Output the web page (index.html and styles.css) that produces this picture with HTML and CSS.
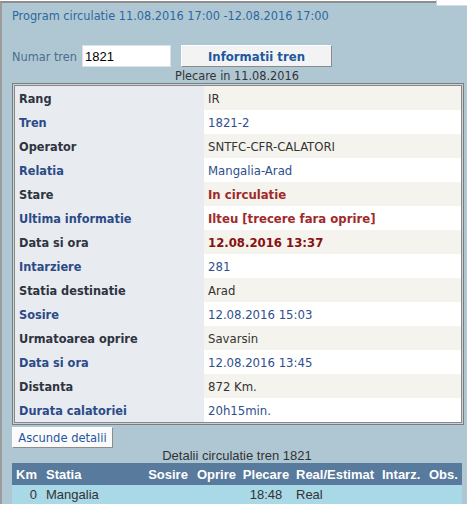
FILE: index.html
```html
<!DOCTYPE html>
<html>
<head>
<meta charset="utf-8">
<link rel="stylesheet" href="styles.css">
</head>
<body>
<div class="corner"></div>
<div class="panel">
  <div class="title">Program circulatie 11.08.2016 17:00 -12.08.2016 17:00</div>
  <div class="form-row">
    <label class="lbl">Numar tren</label>
    <input class="num" type="text" value="1821">
    <button class="btn-info">Informatii tren</button>
  </div>
  <div class="plecare">Plecare in 11.08.2016</div>
  <div class="frame">
    <table class="info">
      <tr class="odd"><th class="dark">Rang</th><td class="dark">IR</td></tr>
      <tr class="even"><th class="blue">Tren</th><td class="blue">1821-2</td></tr>
      <tr class="odd"><th class="dark">Operator</th><td class="dark">SNTFC-CFR-CALATORI</td></tr>
      <tr class="even"><th class="blue">Relatia</th><td class="blue">Mangalia-Arad</td></tr>
      <tr class="odd"><th class="dark">Stare</th><td class="red">In circulatie</td></tr>
      <tr class="even"><th class="blue">Ultima informatie</th><td class="red">Ilteu [trecere fara oprire]</td></tr>
      <tr class="odd"><th class="dark">Data si ora</th><td class="dred">12.08.2016 13:37</td></tr>
      <tr class="even"><th class="blue">Intarziere</th><td class="blue">281</td></tr>
      <tr class="odd"><th class="dark">Statia destinatie</th><td class="dark">Arad</td></tr>
      <tr class="even"><th class="blue">Sosire</th><td class="blue">12.08.2016 15:03</td></tr>
      <tr class="odd"><th class="dark">Urmatoarea oprire</th><td class="dark">Savarsin</td></tr>
      <tr class="even"><th class="blue">Data si ora</th><td class="blue">12.08.2016 13:45</td></tr>
      <tr class="odd"><th class="dark">Distanta</th><td class="dark">872 Km.</td></tr>
      <tr class="even"><th class="blue">Durata calatoriei</th><td class="blue">20h15min.</td></tr>
    </table>
  </div>
  <button class="btn-hide">Ascunde detalii</button>
  <div class="det-title">Detalii circulatie tren 1821</div>
  <table class="det">
    <colgroup>
      <col class="c-km"><col class="c-st"><col class="c-so"><col class="c-op"><col class="c-pl"><col class="c-re"><col class="c-in"><col class="c-ob">
    </colgroup>
    <tr class="head">
      <th class="r">Km</th><th class="l">Statia</th><th class="c">Sosire</th><th class="c">Oprire</th><th class="c">Plecare</th><th class="l">Real/Estimat</th><th class="l">Intarz.</th><th class="l">Obs.</th>
    </tr>
    <tr class="row">
      <td class="r">0</td><td class="l">Mangalia</td><td class="c"></td><td class="c"></td><td class="c">18:48</td><td class="l">Real</td><td class="l"></td><td class="l"></td>
    </tr>
  </table>
</div>
</body>
</html>
```

FILE: styles.css
```css
html, body {
  margin: 0;
  padding: 0;
  background: #ffffff;
}
body {
  position: relative;
  width: 467px;
  height: 514px;
  overflow: hidden;
  font-family: "DejaVu Sans Condensed", "DejaVu Sans", sans-serif;
  font-stretch: condensed;
}
.corner {
  position: absolute;
  left: 436px;
  top: 0;
  width: 31px;
  height: 5px;
  background: #ffffff;
  border-left: 1px solid #c4d0d8;
  border-bottom: 1px solid #d4dde3;
  z-index: 2;
}
.panel {
  margin-top: 1px;
  border-top: 2px solid #8e8e8e;
  border-left: 2px solid #9c9c9c;
  background: #afc7d3;
  padding: 5px 5px 0 10px;
}
.title {
  font-size: 12.6px;
  line-height: 16px;
  color: #2c68a0;
}
.form-row {
  display: flex;
  align-items: center;
  height: 22px;
  margin-top: 21px;
}
.lbl {
  width: 70px;
  font-size: 12.6px;
  color: #4a6e8e;
}
.num {
  box-sizing: border-box;
  width: 89px;
  height: 22px;
  margin: 0 10px 0 0;
  padding: 0 2px;
  border: 1px solid #d8e2e8;
  background: #ffffff;
  font-family: "Liberation Sans", Arial, sans-serif;
  font-size: 13px;
  color: #000000;
  outline: none;
}
.btn-info {
  box-sizing: border-box;
  width: 151px;
  height: 22px;
  margin: 0;
  padding: 0;
  background: #f3f3f3;
  border: 1px solid;
  border-color: #ffffff #8a8a8a #8a8a8a #ffffff;
  font-family: inherit;
  font-stretch: condensed;
  font-size: 13px;
  font-weight: bold;
  color: #1f57a0;
}
.plecare {
  text-align: center;
  font-size: 12.6px;
  line-height: 15px;
  color: #333333;
  margin-top: 1px;
}
.frame {
  width: 448px;
  border: 1px solid #7c7c7c;
  padding: 1px;
  background: #c9d3d9;
}
.info {
  width: 100%;
  border-collapse: collapse;
  border: 1px solid #888888;
}
.info th, .info td {
  height: 24px;
  padding: 0 0 0 4px;
  text-align: left;
  font-size: 13px;
  white-space: nowrap;
}
.info th {
  width: 185px;
  background: #e8ecf0;
  font-weight: bold;
  font-size: 12.6px;
}
.info tr.odd td { background: #f5f3ee; }
.info tr.even td { background: #ffffff; }
.dark { color: #333333; }
.info th.dark { color: #2f3340; }
.blue { color: #2c4a88; }
.info td.blue { color: #2e4f8c; }
.red { color: #a02a2a; font-weight: bold; }
.dred { color: #8a1010; font-weight: bold; }
.btn-hide {
  display: block;
  box-sizing: border-box;
  width: 101px;
  height: 21px;
  margin: 2px 0 0 0;
  padding: 0;
  background: #fbfbfb;
  border: 1px solid;
  border-color: #ffffff #8c8c8c #8c8c8c #ffffff;
  font-family: inherit;
  font-stretch: condensed;
  font-size: 12.8px;
  color: #1f57a0;
}
.det-title {
  text-align: center;
  font-family: "Liberation Sans", Arial, sans-serif;
  font-size: 13px;
  line-height: 15px;
  color: #333333;
}
.det {
  width: 450px;
  table-layout: fixed;
  border-collapse: collapse;
  font-family: "Liberation Sans", Arial, sans-serif;
  font-size: 13px;
}
.c-km { width: 30px; }
.c-st { width: 101px; }
.c-so { width: 50px; }
.c-op { width: 47px; }
.c-pl { width: 52px; }
.c-re { width: 86px; }
.c-in { width: 47px; }
.c-ob { width: 37px; }
.det th, .det td {
  padding: 0 4px;
  white-space: nowrap;
  overflow: hidden;
}
.det .r { text-align: right; padding-right: 5px; }
.det .l { text-align: left; }
.det .c { text-align: center; padding: 0; }
.det tr.head th {
  height: 22px;
  background: #587a9c;
  color: #ffffff;
  font-weight: bold;
}
.det tr.row td {
  height: 19px;
  background: #a9d8e7;
  color: #333333;
}
```
